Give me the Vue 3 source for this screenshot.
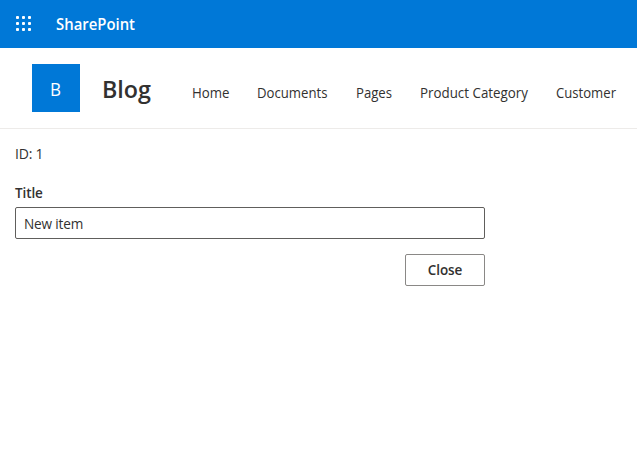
<script setup>
const dots = [0, 1, 2, 3, 4, 5, 6, 7, 8]
const links = [
  { text: 'Home', w: 37.5 }, { text: 'Documents', w: 70.5 }, { text: 'Pages', w: 36 },
  { text: 'Product Category', w: 108 }, { text: 'Customer', w: 60 }
]
</script>

<template>
  <div class="page">
    <header class="suite">
      <svg class="waffle" width="16" height="16" viewBox="0 0 16 16">
        <rect v-for="d in dots" :key="d" :x="(d % 3) * 6" :y="Math.floor(d / 3) * 6" width="3" height="3" rx="0.9" />
      </svg>
      <svg class="brand" width="90" height="48"><text x="0" y="30" textLength="79" lengthAdjust="spacingAndGlyphs">SharePoint</text></svg>
    </header>
    <div class="site">
      <div class="logo"><svg width="12" height="48"><text x="0" y="32" textLength="11" lengthAdjust="spacingAndGlyphs">B</text></svg></div>
      <svg class="name" width="60" height="48"><text x="0" y="34" textLength="49" lengthAdjust="spacingAndGlyphs">Blog</text></svg>
      <nav>
        <svg v-for="l in links" :key="l.text" :width="l.w" height="30"><text x="0" y="20" :textLength="l.w" lengthAdjust="spacingAndGlyphs">{{ l.text }}</text></svg>
      </nav>
    </div>
    <main>
      <div class="id">ID: 1</div>
      <label>Title</label>
      <div class="field">New item</div>
      <button>Close</button>
    </main>
  </div>
</template>

<style>
body { margin: 0; background: #fff; }
</style>
<style scoped>
.page { height: 451px; font-family: "Open Sans", "Noto Sans", sans-serif; color: #323130; font-size: 14px; }
.suite { height: 48px; background: #0078d7; display: flex; align-items: center; box-sizing: border-box; padding-left: 16px; }
.waffle { fill: #fff; }
.brand { margin-left: 24px; fill: #fff; font-size: 15.5px; font-weight: 600; }
.site { height: 81px; box-sizing: border-box; border-bottom: 1px solid #edebe9; display: flex; align-items: flex-start; padding: 16px 0 0 32px; }
.logo { width: 48px; height: 48px; background: #0078d7; font-size: 19px; box-sizing: border-box; padding-left: 17.6px; }
.logo svg { display: block; fill: #fff; }
.name { margin-left: 22px; font-size: 24px; font-weight: 600; fill: #323130; }
nav { display: flex; gap: 28px; padding-top: 14px; margin-left: 29.5px; }
nav svg { overflow: visible; fill: #323130; font-size: 13.7px; }
main { display: flex; flex-direction: column; width: 470px; padding: 15px 0 0 15px; }
.id { line-height: 20px; height: 20px; letter-spacing: -0.2px; }
label { margin-top: 19px; line-height: 20px; height: 20px; font-weight: 600; font-size: 13.5px; letter-spacing: -0.1px; }
.field { margin-top: 4px; height: 32px; box-sizing: border-box; border: 1px solid #605e5c; border-radius: 2px; padding-left: 8px; line-height: 32px; font-size: 13.6px; letter-spacing: -0.15px; }
button { margin-top: 15px; align-self: flex-end; width: 80px; height: 32px; border: 1px solid #8a8886; border-radius: 2px; background: #fff; color: #323130; font: 600 13.5px "Open Sans", sans-serif; padding: 0; letter-spacing: -0.1px; }
</style>
